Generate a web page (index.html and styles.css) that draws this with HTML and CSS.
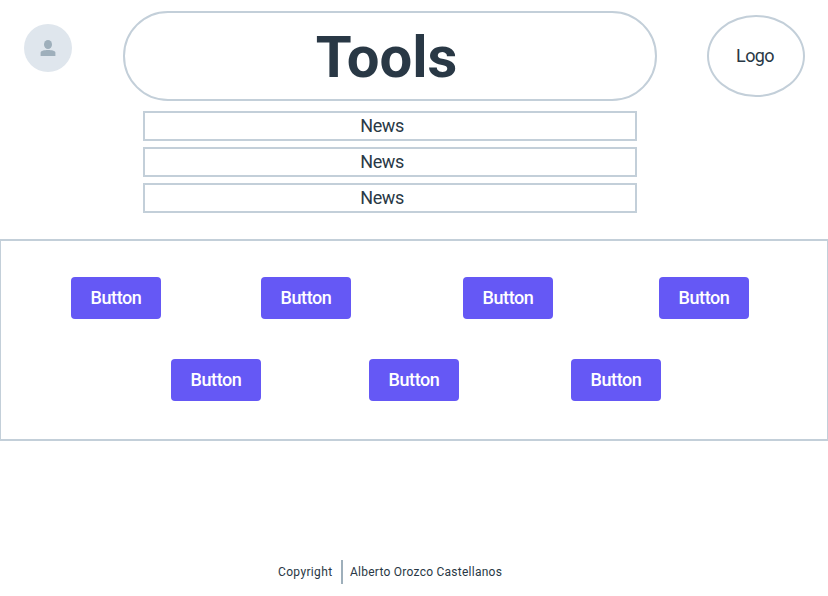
FILE: index.html
```html
<!DOCTYPE html>
<html lang="en">
<head>
<meta charset="utf-8">
<title>Tools</title>
<link rel="stylesheet" href="styles.css">
</head>
<body>
<header class="header">
  <div class="avatar">
    <svg width="16" height="16" viewBox="0 0 16 16" fill="#9eafbb" aria-hidden="true">
      <ellipse cx="8" cy="4.5" rx="4" ry="4.5"/>
      <path d="M.6 16v-3.300C.6 10.800 4 10 8 10s7.400.8 7.400 2.700V16z"/>
    </svg>
  </div>
  <h1 class="title"><span>Tools</span></h1>
  <div class="logo"><span>Logo</span></div>
</header>
<section class="news">
  <div class="news-item"><span>News</span></div>
  <div class="news-item"><span>News</span></div>
  <div class="news-item"><span>News</span></div>
</section>
<main class="panel">
  <div class="row row-four">
    <button class="button"><span>Button</span></button>
    <button class="button"><span>Button</span></button>
    <button class="button"><span>Button</span></button>
    <button class="button"><span>Button</span></button>
  </div>
  <div class="row row-three">
    <button class="button"><span>Button</span></button>
    <button class="button"><span>Button</span></button>
    <button class="button"><span>Button</span></button>
  </div>
</main>
<footer class="footer">
  <span class="copyright">Copyright</span>
  <span class="author">Alberto Orozco Castellanos</span>
</footer>
</body>
</html>
```
FILE: styles.css
```css
* { box-sizing: border-box; }
body {
  margin: 0;
  width: 828px;
  height: 596px;
  overflow: hidden;
  background: #fff;
  color: #293845;
  font-family: Roboto, "Liberation Sans", sans-serif;
  font-size: 18px;
}
.header {
  display: flex;
  align-items: flex-start;
  height: 111px;
  padding: 11px 23px 0 24px;
}
.avatar {
  display: flex;
  align-items: center;
  justify-content: center;
  width: 48px;
  height: 48px;
  margin-top: 13px;
  border-radius: 50%;
  background: #dfe6ed;
}
.title {
  display: flex;
  align-items: center;
  justify-content: center;
  width: 534px;
  height: 90px;
  margin: 0 50px 0 51px;
  padding: 1px 7px 0 0;
  border: 2px solid #c3cfd9;
  border-radius: 45px;
  font-size: 58px;
  font-weight: 700;
  line-height: 1;
}
.logo {
  display: flex;
  align-items: center;
  justify-content: center;
  width: 98px;
  height: 82px;
  margin-top: 4px;
  padding: 0 2px 2px 0;
  border: 2px solid #c3cfd9;
  border-radius: 50%;
  letter-spacing: -0.6px;
}
.news {
  display: flex;
  flex-direction: column;
  gap: 6px;
  width: 494px;
  margin-left: 143px;
}
.news-item {
  display: flex;
  align-items: center;
  justify-content: center;
  height: 30px;
  padding: 0 16px 2px 0;
  border: 2px solid #c3cfd9;
  letter-spacing: -0.4px;
}
.panel {
  height: 202px;
  margin-top: 26px;
  padding-top: 36px;
  border: solid #c3cfd9;
  border-width: 2px 1px;
}
.row { display: grid; }
.row-four {
  grid-template-columns: 190px 202px 196px 90px;
  padding-left: 70px;
}
.row-three {
  grid-template-columns: 198px 202px 90px;
  margin-top: 40px;
  padding-left: 170px;
}
.button {
  width: 90px;
  height: 42px;
  padding: 0 0 2px;
  border: 0;
  border-radius: 4px;
  background: #6558f5;
  color: #fff;
  font: 500 18px Roboto, "Liberation Sans", sans-serif;
  letter-spacing: -0.4px;
}
.footer {
  display: flex;
  align-items: center;
  height: 24px;
  margin-top: 119px;
  padding-left: 278px;
  font-size: 12px;
  line-height: 24px;
  letter-spacing: 0.25px;
}
.copyright {
  width: 65px;
  border-right: 2px solid #9eafbb;
  letter-spacing: 0.35px;
}
.author { padding-left: 7px; white-space: nowrap; }
```
